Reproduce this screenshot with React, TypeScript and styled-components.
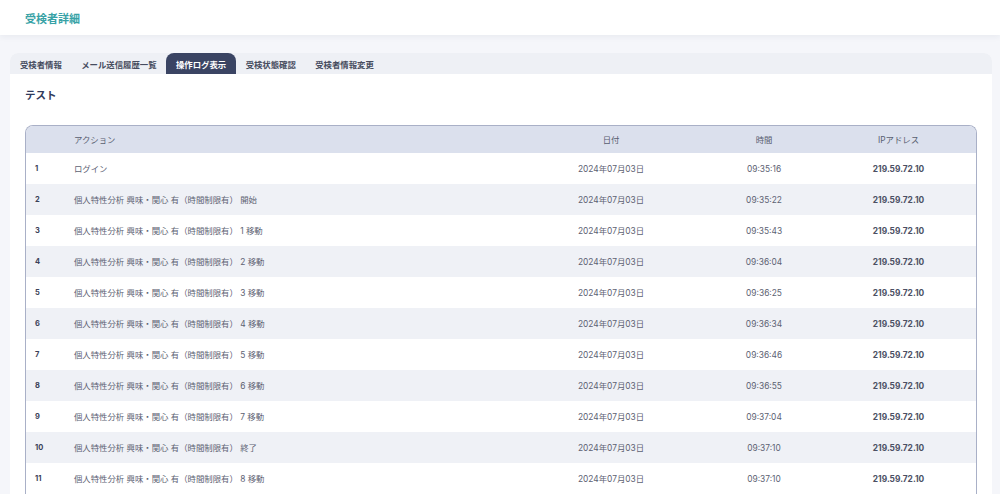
import React from "react";
import styled, { createGlobalStyle } from "styled-components";

const GlobalStyle = createGlobalStyle`
    html, body {
        margin: 0;
        padding: 0;
        background: #f5f6fa;
        font-family: Inter, "Noto Sans CJK JP", sans-serif;
    }
`;

const Page = styled.div`
    min-height: 100vh;
    background: #f5f6fa;
`;

const Header = styled.header`
    height: 35px;
    background: #ffffff;
    display: flex;
    align-items: center;
    padding-left: 25px;
    box-shadow: 0 2px 6px rgba(40, 50, 90, 0.06);
    h1 {
        margin: 0;
        font-size: 11px;
        font-weight: 700;
        color: #37a2a6;
        letter-spacing: 0;
    }
`;

const Card = styled.section`
    margin: 18px 8px 0 10px;
    border-radius: 8px 8px 0 0;
    overflow: hidden;
    background: #ffffff;
`;

const TabBar = styled.nav`
    display: flex;
    height: 21px;
    background: #eef0f5;
`;

const Tab = styled.div<{ active?: boolean }>`
    display: flex;
    align-items: center;
    padding: 0 9.7px;
    font-size: 8.4px;
    font-weight: 700;
    color: ${(p) => (p.active ? "#ffffff" : "#464c5e")};
    background: ${(p) => (p.active ? "#3a4463" : "transparent")};
    border-radius: ${(p) => (p.active ? "8px 8px 0 0" : "0")};
    cursor: pointer;
    &:first-child {
        padding-left: 10px;
    }
`;

const Body = styled.div`
    padding: 14px 15px 0 15px;
`;

const Name = styled.h2`
    margin: 0 0 21px 0;
    font-size: 10.5px;
    font-weight: 700;
    color: #303a5c;
    line-height: 16px;
`;

const Table = styled.div`
    border: 1px solid #a9b0c7;
    border-bottom: none;
    border-radius: 8px 8px 0 0;
    overflow: hidden;
`;

const Row = styled.div<{ head?: boolean; striped?: boolean }>`
    display: grid;
    grid-template-columns: 48px 461px 152px 154px 1fr;
    align-items: center;
    height: ${(p) => (p.head ? "27px" : "31px")};
    background: ${(p) =>
        p.head ? "#dbe0ed" : p.striped ? "#eff1f6" : "#ffffff"};
    font-size: 8.4px;
    color: ${(p) => (p.head ? "#585e70" : "#5d6273")};
`;

const Cell = styled.div<{ center?: boolean; bold?: boolean; num?: boolean }>`
    text-align: ${(p) => (p.center ? "center" : "left")};
    font-weight: ${(p) => (p.bold || p.num ? 700 : 400)};
    color: ${(p) => (p.num ? "#3b4158" : p.bold ? "#4b5064" : "inherit")};
    padding-left: ${(p) => (p.num ? "9px" : "0")};
    font-size: ${(p) => (p.num ? "7.5px" : "inherit")};
    line-height: 12px;
    white-space: nowrap;
    &:last-child {
        padding-right: 20px;
    }
`;

const tabs = ["受検者情報", "メール送信履歴一覧", "操作ログ表示", "受検状態確認", "受検者情報変更"];

const base = "個人特性分析 興味・関心 有（時間制限有）";

const logs = [
    { action: "ログイン", time: "09:35:16" },
    { action: `${base} 開始`, time: "09:35:22" },
    { action: `${base} 1 移動`, time: "09:35:43" },
    { action: `${base} 2 移動`, time: "09:36:04" },
    { action: `${base} 3 移動`, time: "09:36:25" },
    { action: `${base} 4 移動`, time: "09:36:34" },
    { action: `${base} 5 移動`, time: "09:36:46" },
    { action: `${base} 6 移動`, time: "09:36:55" },
    { action: `${base} 7 移動`, time: "09:37:04" },
    { action: `${base} 終了`, time: "09:37:10" },
    { action: `${base} 8 移動`, time: "09:37:10" },
];

const App = () => (
    <Page>
        <GlobalStyle />
        <Header>
            <h1>受検者詳細</h1>
        </Header>
        <Card>
            <TabBar>
                {tabs.map((t) => (
                    <Tab key={t} active={t === "操作ログ表示"}>
                        {t}
                    </Tab>
                ))}
            </TabBar>
            <Body>
                <Name>テスト</Name>
                <Table>
                    <Row head>
                        <Cell />
                        <Cell>アクション</Cell>
                        <Cell center>日付</Cell>
                        <Cell center>時間</Cell>
                        <Cell center>IPアドレス</Cell>
                    </Row>
                    {logs.map((log, i) => (
                        <Row key={i} striped={i % 2 === 1}>
                            <Cell num>{i + 1}</Cell>
                            <Cell>{log.action}</Cell>
                            <Cell center>2024年07月03日</Cell>
                            <Cell center>{log.time}</Cell>
                            <Cell center bold>
                                219.59.72.10
                            </Cell>
                        </Row>
                    ))}
                </Table>
            </Body>
        </Card>
    </Page>
);

export default App;
